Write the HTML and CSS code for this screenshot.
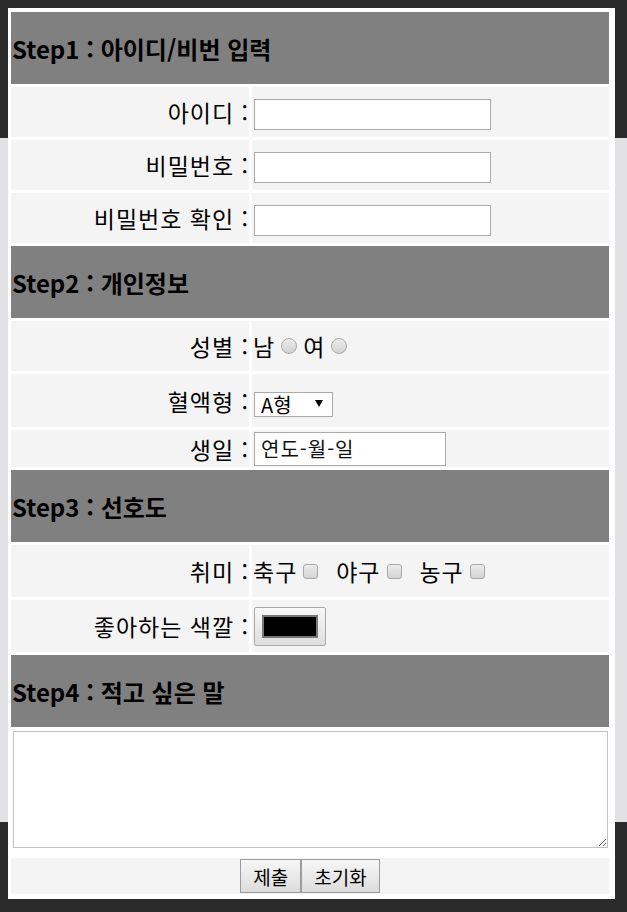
FILE: index.html
```html
<!DOCTYPE html>
<html lang="ko">
<head>
  <meta charset="UTF-8">
  <meta name="viewport" content="width=device-width, initial-scale=1.0">
  <title>회원가입</title>
  <link rel="stylesheet" href="styles.css">
</head>
<body>
  <div class="join-box">
    <form>
      <table class="join-table">
        <colgroup>
          <col class="col-label">
          <col>
        </colgroup>

        <!-- Step1 -->
        <tr><th colspan="2" class="step">Step1 : 아이디/비번 입력</th></tr>
        <tr class="row">
          <td class="label">아이디 :</td>
          <td class="field"><input type="text" class="text-input" name="id"></td>
        </tr>
        <tr class="row">
          <td class="label">비밀번호 :</td>
          <td class="field"><input type="password" class="text-input" name="pw"></td>
        </tr>
        <tr class="row">
          <td class="label">비밀번호 확인 :</td>
          <td class="field"><input type="password" class="text-input" name="pw2"></td>
        </tr>

        <!-- Step2 -->
        <tr><th colspan="2" class="step">Step2 : 개인정보</th></tr>
        <tr class="row">
          <td class="label">성별 :</td>
          <td class="field">남<input type="radio" name="gender" value="m">여<input type="radio" name="gender" value="f"></td>
        </tr>
        <tr class="row-blood">
          <td class="label">혈액형 :</td>
          <td class="field">
            <span class="select-wrap">
              <select name="blood">
                <option>A형</option>
                <option>B형</option>
                <option>O형</option>
                <option>AB형</option>
              </select>
            </span>
          </td>
        </tr>
        <tr class="row-birth">
          <td class="label">생일 :</td>
          <td class="field"><input type="text" class="date-input" name="birth" placeholder="연도-월-일"></td>
        </tr>

        <!-- Step3 -->
        <tr><th colspan="2" class="step">Step3 : 선호도</th></tr>
        <tr class="row-pref">
          <td class="label">취미 :</td>
          <td class="field">축구<input type="checkbox" name="hobby" value="soccer">&nbsp;&nbsp;야구<input type="checkbox" name="hobby" value="baseball">&nbsp;&nbsp;농구<input type="checkbox" name="hobby" value="basketball"></td>
        </tr>
        <tr class="row-pref">
          <td class="label">좋아하는 색깔 :</td>
          <td class="field"><input type="color" class="color-input" name="color" value="#000000"></td>
        </tr>

        <!-- Step4 -->
        <tr><th colspan="2" class="step">Step4 : 적고 싶은 말</th></tr>
        <tr>
          <td colspan="2" class="memo"><textarea name="memo"></textarea></td>
        </tr>
        <tr>
          <td colspan="2" class="buttons"><input type="submit" class="btn" value="제출"><input type="reset" class="btn" value="초기화"></td>
        </tr>
      </table>
    </form>
  </div>
</body>
</html>
```

FILE: styles.css
```css
html {
  min-height: 100%;
  background: linear-gradient(#2a2a2a 0, #2a2a2a 138px, #e2e2e4 138px, #e2e2e4 822px, #2a2a2a 822px);
}
body {
  margin: 8px;
  font-family: "Noto Sans CJK KR", "Malgun Gothic", sans-serif;
  color: #000;
}
form {
  margin: 0;
}
.join-box {
  width: 607px;
  background-color: #fff;
  padding: 1px 0 2px;
}
.join-table {
  width: 604px;
  border-spacing: 3px;
  table-layout: fixed;
}
.col-label {
  width: 238px;
}
.step {
  background-color: #808080;
  height: 70px;
  padding: 1px;
  text-align: left;
  font-size: 24px;
  font-weight: bold;
}
.label, .field {
  background-color: #f4f4f4;
  font-size: 23px;
  letter-spacing: 1px;
  padding: 1px;
}
.label {
  text-align: right;
  padding-right: 0;
}
.row td {
  height: 48px;
}
.row-blood td {
  height: 51px;
}
.row-birth td {
  height: 35px;
}
.row-pref td {
  height: 50px;
}
.text-input {
  width: 237px;
  height: 31px;
  box-sizing: border-box;
  margin: 0 0 0 1px;
  padding: 0 4px;
  border: 1px solid #ababab;
  font-family: inherit;
  font-size: 20px;
  vertical-align: middle;
}
.date-input {
  width: 192px;
  height: 34px;
  box-sizing: border-box;
  margin: 0 0 0 1px;
  padding: 0 6px;
  border: 1px solid #ababab;
  font-family: inherit;
  font-size: 20px;
  letter-spacing: 1px;
  vertical-align: top;
}
.date-input::placeholder {
  color: #111;
}
input[type="radio"], input[type="checkbox"] {
  appearance: none;
  -webkit-appearance: none;
  box-sizing: border-box;
  border: 1px solid #a8a8a8;
  background: linear-gradient(#ececec, #d3d3d3);
  vertical-align: 2px;
}
input[type="radio"] {
  width: 16px;
  height: 16px;
  margin: 0 6px 0 6px;
  border-radius: 50%;
}
input[type="checkbox"] {
  width: 15px;
  height: 15px;
  margin: 0 3px 0 6px;
  border-radius: 3px;
}
.select-wrap {
  position: relative;
  display: inline-block;
  margin-left: 1px;
  vertical-align: middle;
}
.select-wrap::after {
  content: "";
  position: absolute;
  right: 10px;
  top: 8px;
  border-left: 4px solid transparent;
  border-right: 4px solid transparent;
  border-top: 7px solid #000;
  pointer-events: none;
}
.select-wrap select {
  appearance: none;
  -webkit-appearance: none;
  display: block;
  width: 79px;
  height: 25px;
  box-sizing: border-box;
  margin: 0;
  padding: 0 0 0 6px;
  border: 1px solid #aaa;
  border-radius: 0;
  background: #fff;
  font-family: inherit;
  font-size: 20px;
  line-height: 23px;
  color: #000;
}
.color-input {
  appearance: none;
  -webkit-appearance: none;
  width: 72px;
  height: 39px;
  box-sizing: border-box;
  margin: 0 0 0 1px;
  padding: 0;
  border: 1px solid #a9a9a9;
  border-radius: 2px;
  background: linear-gradient(#f8f8f8, #dedede);
  vertical-align: middle;
}
.color-input::-webkit-color-swatch-wrapper {
  padding: 7px;
}
.color-input::-webkit-color-swatch {
  border: 2px solid #777;
  border-radius: 0;
}
.memo {
  padding: 1px;
  font-size: 22px;
}
.memo textarea {
  width: 595px;
  height: 117px;
  box-sizing: border-box;
  margin: 0 0 0 1px;
  border: 1px solid #c2c2c2;
  font-family: inherit;
}
.buttons {
  background-color: #f4f4f4;
  text-align: center;
  padding: 1px;
}
.btn {
  height: 34px;
  margin: 0;
  padding: 0 12px;
  border: 1px solid #9c9c9c;
  border-radius: 0;
  background: linear-gradient(#f7f7f7, #dcdcdc);
  font-family: inherit;
  font-size: 19px;
  color: #000;
  vertical-align: middle;
}
```
